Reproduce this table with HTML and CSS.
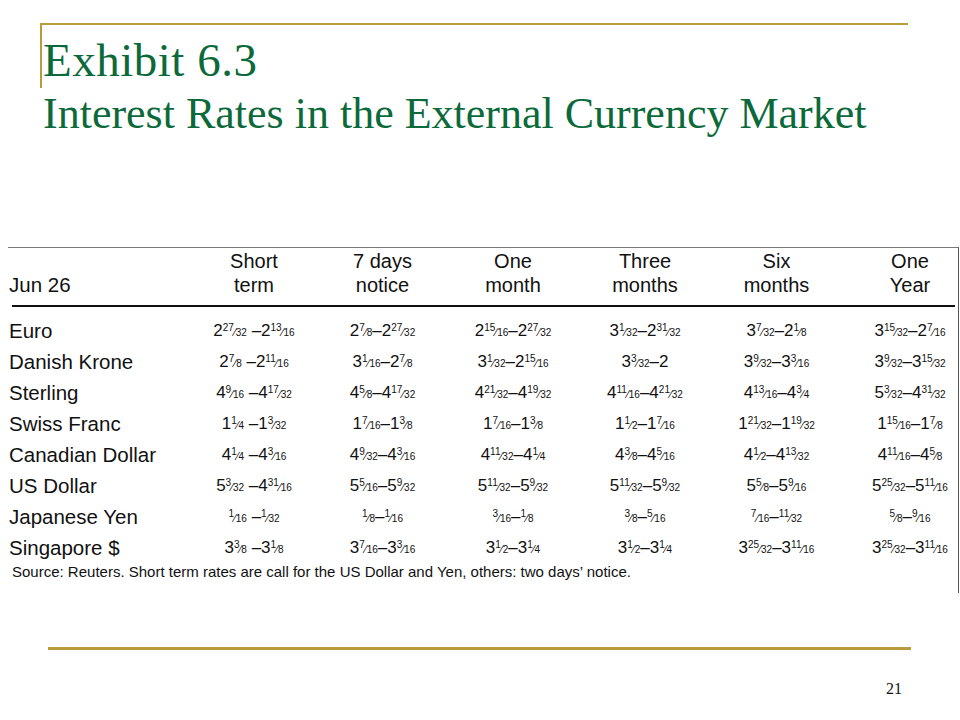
FILE: index.html
```html
<!DOCTYPE html>
<html>
<head>
<meta charset="utf-8">
<title>Exhibit 6.3</title>
<link rel="stylesheet" href="styles.css">
</head>
<body>
<div class="slide">
  <header class="title">
    <div class="frame"><h1>Exhibit 6.3</h1></div>
    <h2>Interest Rates in the External Currency Market</h2>
  </header>

  <section class="table">
    <div class="grid head">
      <div class="lab date">Jun 26</div>
      <div class="c">Short<br>term</div>
      <div class="c">7 days<br>notice</div>
      <div class="c">One<br>month</div>
      <div class="c">Three<br>months</div>
      <div class="c">Six<br>months</div>
      <div class="c last">One<br>Year</div>
    </div>
    <div class="rule"></div>
    <div class="grid body">
      <div class="lab">Euro</div>
      <div class="c">2<span class="f"><sup>27</sup>⁄<sub>32</sub></span> –2<span class="f"><sup>13</sup>⁄<sub>16</sub></span></div>
      <div class="c">2<span class="f"><sup>7</sup>⁄<sub>8</sub></span>–2<span class="f"><sup>27</sup>⁄<sub>32</sub></span></div>
      <div class="c">2<span class="f"><sup>15</sup>⁄<sub>16</sub></span>–2<span class="f"><sup>27</sup>⁄<sub>32</sub></span></div>
      <div class="c">3<span class="f"><sup>1</sup>⁄<sub>32</sub></span>–2<span class="f"><sup>31</sup>⁄<sub>32</sub></span></div>
      <div class="c">3<span class="f"><sup>7</sup>⁄<sub>32</sub></span>–2<span class="f"><sup>1</sup>⁄<sub>8</sub></span></div>
      <div class="c last">3<span class="f"><sup>15</sup>⁄<sub>32</sub></span>–2<span class="f"><sup>7</sup>⁄<sub>16</sub></span></div>

      <div class="lab">Danish Krone</div>
      <div class="c">2<span class="f"><sup>7</sup>⁄<sub>8</sub></span> –2<span class="f"><sup>11</sup>⁄<sub>16</sub></span></div>
      <div class="c">3<span class="f"><sup>1</sup>⁄<sub>16</sub></span>–2<span class="f"><sup>7</sup>⁄<sub>8</sub></span></div>
      <div class="c">3<span class="f"><sup>1</sup>⁄<sub>32</sub></span>–2<span class="f"><sup>15</sup>⁄<sub>16</sub></span></div>
      <div class="c">3<span class="f"><sup>3</sup>⁄<sub>32</sub></span>–2</div>
      <div class="c">3<span class="f"><sup>9</sup>⁄<sub>32</sub></span>–3<span class="f"><sup>3</sup>⁄<sub>16</sub></span></div>
      <div class="c last">3<span class="f"><sup>9</sup>⁄<sub>32</sub></span>–3<span class="f"><sup>15</sup>⁄<sub>32</sub></span></div>

      <div class="lab">Sterling</div>
      <div class="c">4<span class="f"><sup>9</sup>⁄<sub>16</sub></span> –4<span class="f"><sup>17</sup>⁄<sub>32</sub></span></div>
      <div class="c">4<span class="f"><sup>5</sup>⁄<sub>8</sub></span>–4<span class="f"><sup>17</sup>⁄<sub>32</sub></span></div>
      <div class="c">4<span class="f"><sup>21</sup>⁄<sub>32</sub></span>–4<span class="f"><sup>19</sup>⁄<sub>32</sub></span></div>
      <div class="c">4<span class="f"><sup>11</sup>⁄<sub>16</sub></span>–4<span class="f"><sup>21</sup>⁄<sub>32</sub></span></div>
      <div class="c">4<span class="f"><sup>13</sup>⁄<sub>16</sub></span>–4<span class="f"><sup>3</sup>⁄<sub>4</sub></span></div>
      <div class="c last">5<span class="f"><sup>3</sup>⁄<sub>32</sub></span>–4<span class="f"><sup>31</sup>⁄<sub>32</sub></span></div>

      <div class="lab">Swiss Franc</div>
      <div class="c">1<span class="f"><sup>1</sup>⁄<sub>4</sub></span> –1<span class="f"><sup>3</sup>⁄<sub>32</sub></span></div>
      <div class="c">1<span class="f"><sup>7</sup>⁄<sub>16</sub></span>–1<span class="f"><sup>3</sup>⁄<sub>8</sub></span></div>
      <div class="c">1<span class="f"><sup>7</sup>⁄<sub>16</sub></span>–1<span class="f"><sup>3</sup>⁄<sub>8</sub></span></div>
      <div class="c">1<span class="f"><sup>1</sup>⁄<sub>2</sub></span>–1<span class="f"><sup>7</sup>⁄<sub>16</sub></span></div>
      <div class="c">1<span class="f"><sup>21</sup>⁄<sub>32</sub></span>–1<span class="f"><sup>19</sup>⁄<sub>32</sub></span></div>
      <div class="c last">1<span class="f"><sup>15</sup>⁄<sub>16</sub></span>–1<span class="f"><sup>7</sup>⁄<sub>8</sub></span></div>

      <div class="lab">Canadian Dollar</div>
      <div class="c">4<span class="f"><sup>1</sup>⁄<sub>4</sub></span> –4<span class="f"><sup>3</sup>⁄<sub>16</sub></span></div>
      <div class="c">4<span class="f"><sup>9</sup>⁄<sub>32</sub></span>–4<span class="f"><sup>3</sup>⁄<sub>16</sub></span></div>
      <div class="c">4<span class="f"><sup>11</sup>⁄<sub>32</sub></span>–4<span class="f"><sup>1</sup>⁄<sub>4</sub></span></div>
      <div class="c">4<span class="f"><sup>3</sup>⁄<sub>8</sub></span>–4<span class="f"><sup>5</sup>⁄<sub>16</sub></span></div>
      <div class="c">4<span class="f"><sup>1</sup>⁄<sub>2</sub></span>–4<span class="f"><sup>13</sup>⁄<sub>32</sub></span></div>
      <div class="c last">4<span class="f"><sup>11</sup>⁄<sub>16</sub></span>–4<span class="f"><sup>5</sup>⁄<sub>8</sub></span></div>

      <div class="lab">US Dollar</div>
      <div class="c">5<span class="f"><sup>3</sup>⁄<sub>32</sub></span> –4<span class="f"><sup>31</sup>⁄<sub>16</sub></span></div>
      <div class="c">5<span class="f"><sup>5</sup>⁄<sub>16</sub></span>–5<span class="f"><sup>9</sup>⁄<sub>32</sub></span></div>
      <div class="c">5<span class="f"><sup>11</sup>⁄<sub>32</sub></span>–5<span class="f"><sup>9</sup>⁄<sub>32</sub></span></div>
      <div class="c">5<span class="f"><sup>11</sup>⁄<sub>32</sub></span>–5<span class="f"><sup>9</sup>⁄<sub>32</sub></span></div>
      <div class="c">5<span class="f"><sup>5</sup>⁄<sub>8</sub></span>–5<span class="f"><sup>9</sup>⁄<sub>16</sub></span></div>
      <div class="c last">5<span class="f"><sup>25</sup>⁄<sub>32</sub></span>–5<span class="f"><sup>11</sup>⁄<sub>16</sub></span></div>

      <div class="lab">Japanese Yen</div>
      <div class="c"><span class="f"><sup>1</sup>⁄<sub>16</sub></span> –<span class="f"><sup>1</sup>⁄<sub>32</sub></span></div>
      <div class="c"><span class="f"><sup>1</sup>⁄<sub>8</sub></span>–<span class="f"><sup>1</sup>⁄<sub>16</sub></span></div>
      <div class="c"><span class="f"><sup>3</sup>⁄<sub>16</sub></span>–<span class="f"><sup>1</sup>⁄<sub>8</sub></span></div>
      <div class="c"><span class="f"><sup>3</sup>⁄<sub>8</sub></span>–<span class="f"><sup>5</sup>⁄<sub>16</sub></span></div>
      <div class="c"><span class="f"><sup>7</sup>⁄<sub>16</sub></span>–<span class="f"><sup>11</sup>⁄<sub>32</sub></span></div>
      <div class="c last"><span class="f"><sup>5</sup>⁄<sub>8</sub></span>–<span class="f"><sup>9</sup>⁄<sub>16</sub></span></div>

      <div class="lab">Singapore $</div>
      <div class="c">3<span class="f"><sup>3</sup>⁄<sub>8</sub></span> –3<span class="f"><sup>1</sup>⁄<sub>8</sub></span></div>
      <div class="c">3<span class="f"><sup>7</sup>⁄<sub>16</sub></span>–3<span class="f"><sup>3</sup>⁄<sub>16</sub></span></div>
      <div class="c">3<span class="f"><sup>1</sup>⁄<sub>2</sub></span>–3<span class="f"><sup>1</sup>⁄<sub>4</sub></span></div>
      <div class="c">3<span class="f"><sup>1</sup>⁄<sub>2</sub></span>–3<span class="f"><sup>1</sup>⁄<sub>4</sub></span></div>
      <div class="c">3<span class="f"><sup>25</sup>⁄<sub>32</sub></span>–3<span class="f"><sup>11</sup>⁄<sub>16</sub></span></div>
      <div class="c last">3<span class="f"><sup>25</sup>⁄<sub>32</sub></span>–3<span class="f"><sup>11</sup>⁄<sub>16</sub></span></div>
    </div>
    <p class="source">Source: Reuters. Short term rates are call for the US Dollar and Yen, others: two days’ notice.</p>
  </section>

  <footer class="foot">
    <span class="num">21</span>
  </footer>
</div>
</body>
</html>
```

FILE: styles.css
```css
html, body {
  margin: 0;
  padding: 0;
  background: #ffffff;
}

.slide {
  width: 960px;
  height: 720px;
  overflow: hidden;
  display: flex;
  flex-direction: column;
}

/* ---------- Title ---------- */
.title {
  color: #0c6a3a;
  font-family: "Liberation Serif", "Times New Roman", serif;
}

.frame {
  margin: 23px 0 0 40px;
  width: 865px;
  height: 63px;
  box-sizing: content-box;
  border-top: 2px solid #b99a3d;
  border-left: 2px solid #b99a3d;
  padding-left: 1px;
}

.title h1,
.title h2 {
  margin: 0;
  font-weight: normal;
  font-size: 44px;
  line-height: 50px;
}

.title h1 {
  padding-top: 10px;
  font-size: 47px;
  letter-spacing: 0.5px;
}

.title h2 {
  margin: 1px 0 0 43px;
}

/* ---------- Table ---------- */
.table {
  margin: 108px 0 0 8px;
  width: 950px;
  height: 345px;
  border-top: 1px solid #7a7a7a;
  border-right: 1px solid #555555;
  color: #111111;
  font-family: "Liberation Sans", Arial, sans-serif;
}

.grid {
  display: grid;
  grid-template-columns: 182px 128px 129px 132px 132px 131px 116px;
}

.head {
  padding: 1px 0 8px;
  font-size: 20px;
  line-height: 24px;
}

.head .date {
  align-self: end;
}

.lab {
  padding-left: 1px;
  font-size: 20.5px;
  white-space: nowrap;
}

.c {
  text-align: center;
  white-space: nowrap;
}

.c.last {
  padding-left: 20px;
}

.rule {
  height: 2px;
  margin: 0 3px 0 4px;
  background: #111111;
}

.body {
  padding-top: 8px;
  grid-auto-rows: 31px;
  align-items: center;
  font-size: 17px;
}

.body .lab {
  line-height: 31px;
}

.f {
  font-size: 11px;
}

.f sup,
.f sub {
  font-size: 10px;
  line-height: 0;
}

.f sup {
  vertical-align: 5px;
}

.f sub {
  vertical-align: 0;
}

.source {
  margin: 0;
  padding-left: 4px;
  font-size: 15px;
  line-height: 18px;
  white-space: nowrap;
}

/* ---------- Footer ---------- */
.foot {
  margin: 54px 0 0 48px;
  width: 863px;
  border-top: 3px solid #b99a3d;
  display: flex;
  justify-content: flex-end;
}

.num {
  margin: 30px 9px 0 0;
  font-family: "Liberation Serif", "Times New Roman", serif;
  font-size: 16px;
  line-height: 18px;
  color: #111111;
}
```
